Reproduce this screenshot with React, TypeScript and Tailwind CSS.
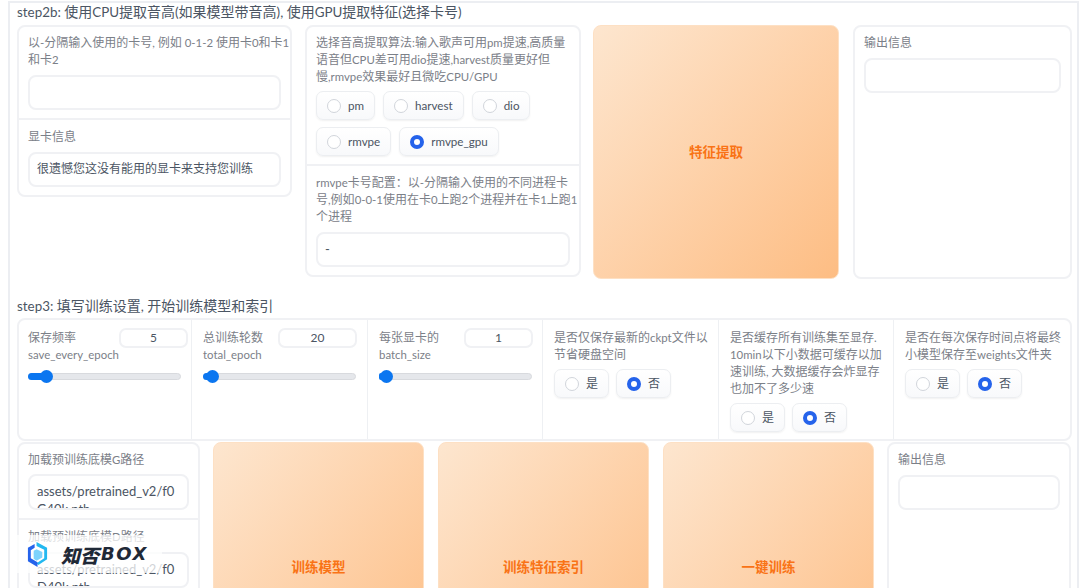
const FONT = "font-['Lato','Noto_Sans_CJK_SC',sans-serif]";

function T({ text, latin }: { text: string; latin: string }) {
  const parts = text.split(/([\x00-\x7f]+)/).filter(Boolean);
  return (
    <>
      {parts.map((p, i) =>
        /^[\x00-\x7f]/.test(p) ? (
          <span key={i} className={latin}>
            {p}
          </span>
        ) : (
          <span key={i}>{p}</span>
        ),
      )}
    </>
  );
}

function Field({ text = "", h = "h-[35px]" }: { text?: string; h?: string }) {
  return (
    <div className={`${h} overflow-hidden rounded-[8px] border-2 border-[#f0f1f4] bg-white px-[7px] py-[7px] text-[12px] leading-[16.5px] text-[#4b5563] break-all`}>
      <T text={text} latin="text-[13px]" />
    </div>
  );
}

function Label({ text, className = "" }: { text: string; className?: string }) {
  return (
    <div className={`whitespace-nowrap text-[12px] leading-[17px] text-[#7b8088] ${className}`}>
      <T text={text} latin="text-[11.4px]" />
    </div>
  );
}

function Lines({ lines, className = "" }: { lines: string[]; className?: string }) {
  return (
    <div className={className}>
      {lines.map((l) => (
        <Label key={l} text={l} />
      ))}
    </div>
  );
}

function Radio({ label, checked = false }: { label: string; checked?: boolean }) {
  return (
    <div className="flex h-[29px] items-center gap-[7px] rounded-[7px] border border-[#eceef1] bg-linear-to-b from-white to-[#f8f9fb] pl-[10px] pr-[10px] text-[12px] text-[#4b5563] shadow-[0_1px_2px_rgba(0,0,0,0.06)]">
      {checked ? (
        <span className="h-[14px] w-[14px] rounded-full border-[4px] border-[#2563eb] bg-white" />
      ) : (
        <span className="h-[14px] w-[14px] rounded-full border border-[#d1d5db] bg-white" />
      )}
      <span>
        <T text={label} latin="text-[11.6px]" />
      </span>
    </div>
  );
}

function Slider({ zh, en, value, cell, labelW, inputW, inputMr, thumb, fill }: { zh: string; en: string; value: string; cell: string; labelW: string; inputW: string; inputMr: string; thumb: string; fill: string }) {
  return (
    <div className={`${cell} shrink-0 border-r border-[#eef0f3] pt-[9px]`}>
      <div className="flex">
        <div className={`${labelW} shrink-0`}>
          <Label text={zh} />
          <Label text={en} />
        </div>
        <div className={`${inputW} ${inputMr} -mt-px flex h-[20px] shrink-0 items-center justify-center rounded-[7px] border-2 border-[#f0f1f4] text-[12px] text-[#4b5563]`}>{value}</div>
      </div>
      <div className="relative mt-[10px] h-[7px] rounded-full border border-[#d8dade] bg-[#e5e7eb]">
        <div className={`absolute -left-px -top-px h-[7px] rounded-full bg-[#0b76f0] ${fill}`} />
        <div className={`absolute top-[-4px] h-[13px] w-[13px] rounded-full bg-[#0b76f0] ${thumb}`} />
      </div>
    </div>
  );
}

function BoolCell({ lines, cell }: { lines: string[]; cell: string }) {
  return (
    <div className={`${cell} shrink-0 pt-[9px]`}>
      <Lines lines={lines} className="mb-[6px]" />
      <div className="flex gap-[7px]">
        <Radio label="是" />
        <Radio label="否" checked />
      </div>
    </div>
  );
}

function ActionButton({ label, w, h }: { label: string; w: string; h: string }) {
  return (
    <div className={`${w} ${h} flex shrink-0 items-center justify-center rounded-[8px] border border-[#fde0c4] bg-linear-to-br from-[#fde6cf] to-[#fdbd83] text-[13.5px] font-bold text-[#f97316]`}>
      {label}
    </div>
  );
}

function Output({ w, h }: { w: string; h: string }) {
  return (
    <div className={`${w} ${h} shrink-0 rounded-[8px] border-2 border-[#f0f1f4] bg-white px-[9px] pt-[7px]`}>
      <Label text="输出信息" className="mb-[7px]" />
      <Field />
    </div>
  );
}

function Logo() {
  return (
    <div className="absolute left-[17px] top-[535px] flex h-[38px] w-[145px] items-center bg-white/75 pl-[9px]">
      <svg width="23" height="27" viewBox="0 0 24 28" fill="none">
        <path d="M11 1 L22 7 V19 L13 25 L11 23 L19 18 V9 L11 5 Z" fill="#22b8f0" />
        <path d="M2 7 L9 3 V7 L5 9.5 V18 L12 22 L12 27 L2 21 Z" fill="#2563eb" />
        <path d="M8 10 L11 8.5 L17 11.5 V17 L11 20.5 L8 18.5 Z" fill="#7dd3fc" />
      </svg>
      <span className="ml-[12px] flex items-center font-bold italic text-[#1f2937]">
        <span className="font-['Noto_Sans_CJK_SC',sans-serif] text-[19px] font-black leading-none">知否</span>
        <span className="ml-[2px] font-['DejaVu_Sans',sans-serif] text-[18px] leading-none tracking-[1.5px]">BOX</span>
      </span>
    </div>
  );
}

export default function App() {
  return (
    <div className={`relative h-[588px] w-[1080px] overflow-hidden bg-white ${FONT}`}>
      <div className="ml-[8px] mr-px mt-px h-[600px] border-x-2 border-t-2 border-[#eceef2] px-[7px]">
        <div className="text-[14px] leading-[17px] text-[#4b5563]">
          <T text="step2b: 使用CPU提取音高(如果模型带音高), 使用GPU提取特征(选择卡号)" latin="text-[13.4px]" />
        </div>
        <div className="mt-[4px] flex items-start">
          <div className="w-[275px] shrink-0 rounded-[8px] border-2 border-[#f0f1f4]">
            <div className="border-b-2 border-[#f0f1f4] px-[9px] pb-[8px] pt-[7px]">
              <Lines lines={["以-分隔输入使用的卡号, 例如 0-1-2 使用卡0和卡1", "和卡2"]} className="mb-[7px]" />
              <Field />
            </div>
            <div className="px-[9px] pb-[8px] pt-[8px]">
              <Label text="显卡信息" className="mb-[7px]" />
              <Field text="很遗憾您这没有能用的显卡来支持您训练" />
            </div>
          </div>
          <div className="ml-[13px] w-[276px] shrink-0 rounded-[8px] border-2 border-[#f0f1f4]">
            <div className="border-b-2 border-[#f0f1f4] px-[9px] pb-[8px] pt-[7px]">
              <Lines lines={["选择音高提取算法:输入歌声可用pm提速,高质量", "语音但CPU差可用dio提速,harvest质量更好但", "慢,rmvpe效果最好且微吃CPU/GPU"]} className="mb-[6px]" />
              <div className="flex flex-wrap gap-x-[8px] gap-y-[7px]">
                <Radio label="pm" />
                <Radio label="harvest" />
                <Radio label="dio" />
                <Radio label="rmvpe" />
                <Radio label="rmvpe_gpu" checked />
              </div>
            </div>
            <div className="px-[9px] pb-[8px] pt-[8px]">
              <Lines lines={["rmvpe卡号配置：以-分隔输入使用的不同进程卡", "号,例如0-0-1使用在卡0上跑2个进程并在卡1上跑1", "个进程"]} className="mb-[7px]" />
              <Field text="-" />
            </div>
          </div>
          <div className="ml-[12px]">
            <ActionButton label="特征提取" w="w-[246px]" h="h-[254px]" />
          </div>
          <div className="ml-[14px]">
            <Output w="w-[219px]" h="h-[254px]" />
          </div>
        </div>

        <div className="mt-[18px] text-[14px] leading-[17px] text-[#4b5563]">
          <T text="step3: 填写训练设置, 开始训练模型和索引" latin="text-[13.4px]" />
        </div>
        <div className="mt-[3px] flex h-[123px] w-[1055px] rounded-[8px] border-2 border-[#f0f1f4]">
          <Slider cell="w-[173px] pl-[9px] pr-[10px]" zh="保存频率" en="save_every_epoch" value="5" labelW="w-[91px]" inputW="w-[69px]" inputMr="mr-[-6px]" thumb="left-[11px]" fill="w-[18px]" />
          <Slider cell="w-[176px] px-[11px]" zh="总训练轮数" en="total_epoch" value="20" labelW="w-[75px]" inputW="w-[79px]" inputMr="mr-0" thumb="left-[2px]" fill="w-[8px]" />
          <Slider cell="w-[175px] pl-[11px] pr-[10px]" zh="每张显卡的" en="batch_size" value="1" labelW="w-[85px]" inputW="w-[69px]" inputMr="mr-0" thumb="left-0" fill="w-[4px]" />
          <div className="w-[176px] shrink-0 border-r border-[#eef0f3] pl-[11px]">
            <BoolCell cell="w-full" lines={["是否仅保存最新的ckpt文件以", "节省硬盘空间"]} />
          </div>
          <div className="w-[175px] shrink-0 border-r border-[#eef0f3] pl-[11px]">
            <BoolCell cell="w-full" lines={["是否缓存所有训练集至显存.", "10min以下小数据可缓存以加", "速训练, 大数据缓存会炸显存", "也加不了多少速"]} />
          </div>
          <div className="w-[174px] shrink-0 pl-[11px]">
            <BoolCell cell="w-full" lines={["是否在每次保存时间点将最终", "小模型保存至weights文件夹"]} />
          </div>
        </div>
        <div className="mt-[1px] flex h-[250px] items-start">
          <div className="h-[250px] w-[183px] shrink-0 rounded-[8px] border-2 border-[#f0f1f4]">
            <div className="border-b-2 border-[#f0f1f4] px-[9px] pb-[8px] pt-[7px]">
              <Label text="加载预训练底模G路径" className="mb-[6px]" />
              <Field text="assets/pretrained_v2/f0G40k.pth" h="h-[36px]" />
            </div>
            <div className="px-[9px] pt-[8px]">
              <Label text="加载预训练底模D路径" className="mb-[7px]" />
              <Field text="assets/pretrained_v2/f0D40k.pth" h="h-[36px]" />
            </div>
          </div>
          <div className="ml-[13px] flex gap-[14px]">
            <ActionButton label="训练模型" w="w-[211px]" h="h-[250px]" />
            <ActionButton label="训练特征索引" w="w-[211px]" h="h-[250px]" />
            <ActionButton label="一键训练" w="w-[211px]" h="h-[250px]" />
          </div>
          <div className="ml-[13px]">
            <Output w="w-[184px]" h="h-[250px]" />
          </div>
        </div>
      </div>
      <Logo />
    </div>
  );
}
